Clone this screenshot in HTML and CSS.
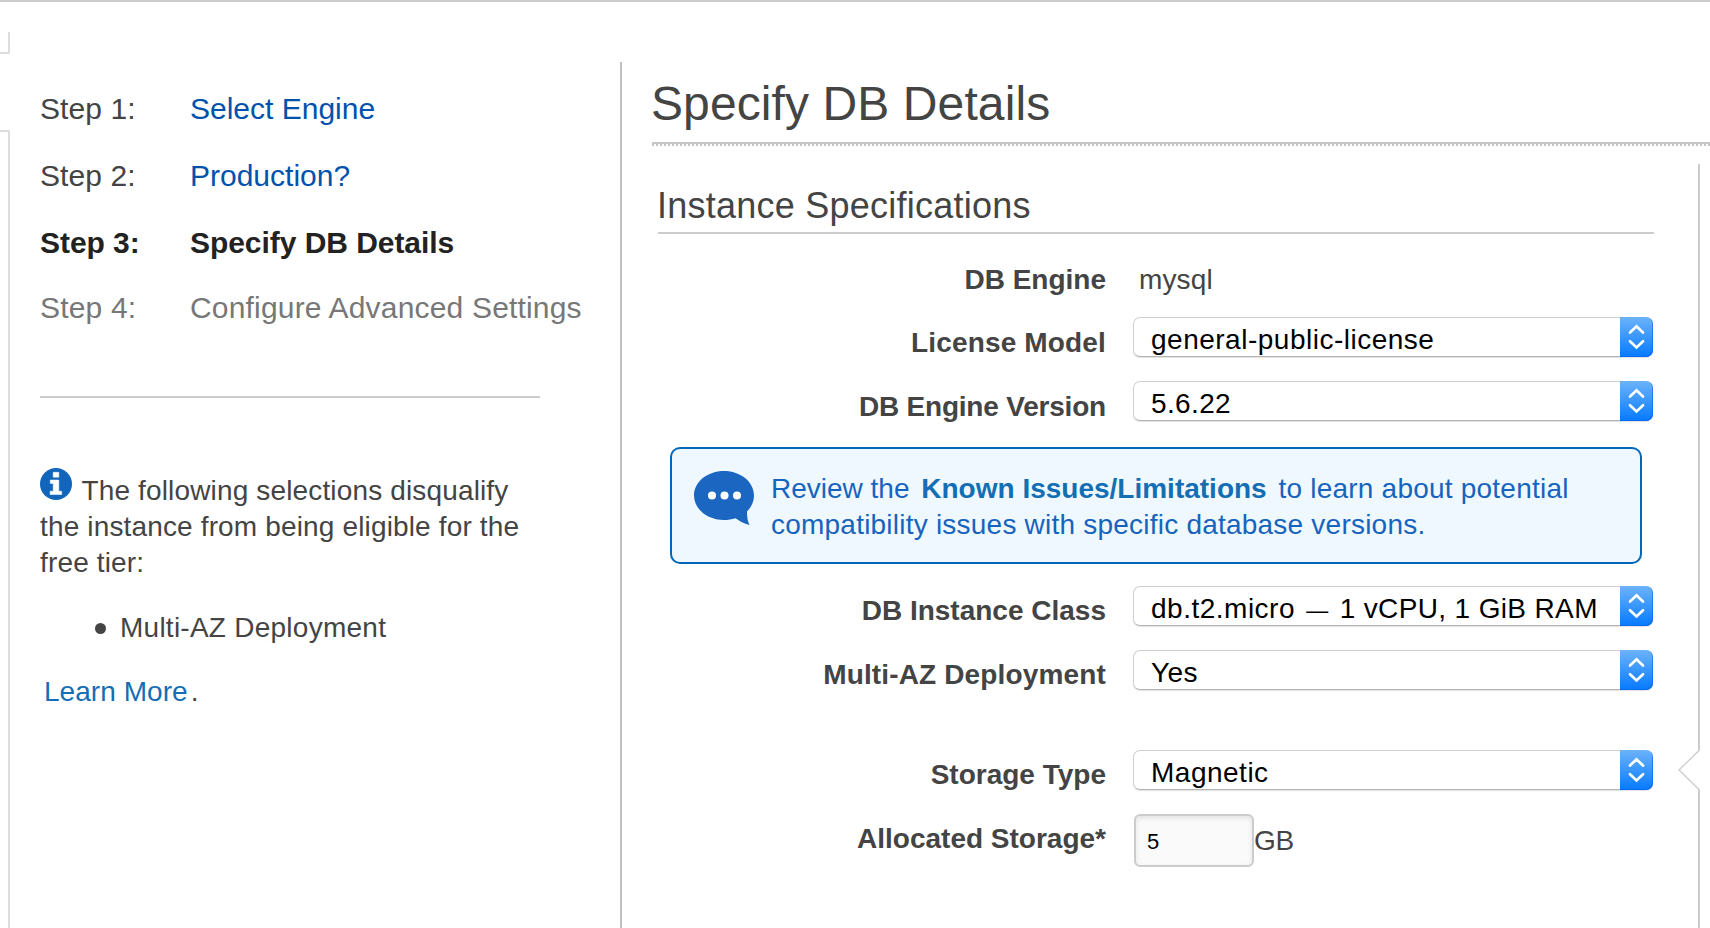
FILE: index.html
```html
<!DOCTYPE html>
<html lang="en">
<head>
<meta charset="utf-8">
<title>Specify DB Details</title>
<link rel="stylesheet" href="styles.css">
</head>
<body>
<svg class="defs" width="0" height="0" aria-hidden="true">
  <symbol id="chevrons" viewBox="0 0 33 40">
    <path d="M10 15.500L16.500 9.300L23 15.500M10 24.300L16.500 30.500L23 24.300" fill="none" stroke="#fff" stroke-width="2.700" stroke-linecap="round" stroke-linejoin="miter"/>
  </symbol>
</svg>
<div class="page">
  <div class="rail">
    <div class="rail-top"></div>
    <div class="rail-bottom"></div>
  </div>
  <aside class="sidebar">
    <ol class="steps">
      <li class="step"><span class="step-num">Step 1:</span><a class="step-name step-link">Select Engine</a></li>
      <li class="step"><span class="step-num">Step 2:</span><a class="step-name step-link">Production?</a></li>
      <li class="step step-current"><span class="step-num">Step 3:</span><span class="step-name">Specify DB Details</span></li>
      <li class="step step-next"><span class="step-num">Step 4:</span><span class="step-name">Configure Advanced Settings</span></li>
    </ol>
    <div class="rule"></div>
    <p class="info"><svg class="info-icon" viewBox="0 0 32 32"><circle cx="16" cy="16" r="16" fill="#1166bb"/><path d="M13.200 4.300h5.600v4.900h-5.600zM10.300 12h8.500v11.200h2.900v3.300h-11.600v-3.300h3.100v-7.800h-2.900z" fill="#fff" stroke="#fff" stroke-width="0.500" stroke-linejoin="round"/></svg> The following selections disqualify<br>the instance from being eligible for the<br>free tier:</p>
    <ul class="reasons"><li class="reason"><span class="bullet"></span>Multi-AZ Deployment</li></ul>
    <p class="more"><a class="more-link">Learn More</a>.</p>
  </aside>
  <main class="main">
    <h1 class="title">Specify DB Details</h1>
    <div class="title-rule"></div>
    <div class="content">
      <section class="form">
        <h2 class="section-title">Instance Specifications</h2>
        <div class="group">
          <div class="row row-static"><span class="label">DB Engine</span><span class="value">mysql</span></div>
          <div class="row"><span class="label label-loose">License Model</span><div class="select"><span class="select-text wide">general-public-license</span><svg class="select-arrows"><use href="#chevrons"/></svg></div></div>
          <div class="row"><span class="label label-tight">DB Engine Version</span><div class="select"><span class="select-text">5.6.22</span><svg class="select-arrows"><use href="#chevrons"/></svg></div></div>
        </div>
        <div class="notice">
          <svg class="bubble" viewBox="0 0 60 54"><path d="M30 0C46.500 0 60 10.800 60 24.500C60 31 57 36.500 53 40.500C53 45.500 53.500 50 55.500 54C50 52.500 45.500 50 41.500 47.200C38 48.400 34 49 30 49C13.500 49 0 38.200 0 24.500S13.500 0 30 0z" fill="#1a66c0"/><g fill="#fff"><circle cx="18" cy="24.500" r="4"/><circle cx="30.500" cy="24.500" r="4"/><circle cx="43" cy="24.500" r="4"/></g></svg>
          <p class="notice-text">Review the <a class="notice-link">Known Issues/Limitations</a> <span class="loose">to learn about potential</span><br><span class="loose">compatibility issues with specific database versions.</span></p>
        </div>
        <div class="group group-lower">
          <div class="row"><span class="label">DB Instance Class</span><div class="select"><span class="select-text"><span class="wide">db.t2.micro</span> <span class="dash">—</span> 1 vCPU, 1 GiB RAM</span><svg class="select-arrows"><use href="#chevrons"/></svg></div></div>
          <div class="row"><span class="label label-loose">Multi-AZ Deployment</span><div class="select"><span class="select-text">Yes</span><svg class="select-arrows"><use href="#chevrons"/></svg></div></div>
        </div>
        <div class="group group-storage">
          <div class="row"><span class="label">Storage Type</span><div class="select"><span class="select-text wide">Magnetic</span><svg class="select-arrows"><use href="#chevrons"/></svg></div></div>
          <div class="row"><span class="label">Allocated Storage*</span><div class="input">5</div><span class="unit">GB</span></div>
        </div>
      </section>
      <div class="edge">
        <div class="edge-upper"></div>
        <svg class="notch" viewBox="0 0 22 40"><path d="M21.500 0L1 20L21.500 40" fill="none" stroke="#ccc" stroke-width="1.300"/></svg>
        <div class="edge-lower"></div>
      </div>
    </div>
  </main>
</div>
</body>
</html>
```

FILE: styles.css
```css
* { box-sizing: border-box; }

body {
  margin: 0;
  background: #fff;
  color: #444;
  font-family: "Liberation Sans", Arial, sans-serif;
  font-size: 28px;
  letter-spacing: 0.15px;
  overflow: hidden;
}

h1, h2, p, ol, ul { margin: 0; padding: 0; list-style: none; font-weight: normal; }

.defs { display: block; }

.page {
  display: flex;
  width: 1710px;
  height: 928px;
  border-top: 2px solid #ccc;
}

/* Left rail */
.rail { display: flex; flex-direction: column; width: 10px; padding-top: 30px; gap: 76px; }
.rail-top { height: 22px; border: solid #ddd; border-width: 0 2px 2px 0; }
.rail-bottom { flex: 1; border: solid #ddd; border-width: 2px 2px 0 0; }

/* Wizard steps */
.sidebar { width: 610px; padding: 73px 0 0 30px; white-space: nowrap; }
.step { display: flex; font-size: 30px; line-height: 67px; letter-spacing: 0.1px; }
.step-num { width: 150px; }
.step-link { color: #0052ad; letter-spacing: 0; }
.step-current { color: #222; font-weight: bold; letter-spacing: -0.05px; }
.step-next { color: #777; line-height: 63px; letter-spacing: 0.18px; }

.rule { width: 500px; height: 2px; margin-top: 57px; background: #ccc; }

.info { margin-top: 75px; line-height: 36px; }
.info-icon { width: 32px; height: 32px; margin: -8px 2px 0 0; }
.reasons { margin-top: 29px; }
.reason { display: flex; align-items: center; line-height: 36px; letter-spacing: 0.25px; }
.bullet { width: 11px; height: 11px; margin: 0 14px 0 55px; border-radius: 50%; background: #444; }
.more { margin-top: 28px; line-height: 36px; }
.more-link { padding: 0 3px 0 4px; color: #146eb4; letter-spacing: 0.05px; }

/* Main column */
.main {
  display: flex;
  flex-direction: column;
  flex: 1;
  margin-top: 60px;
  padding-left: 30px;
  border-left: 2px solid #c0c0c0;
}
.title {
  height: 80px;
  margin-left: -1px;
  font-size: 48px;
  line-height: 83px;
  letter-spacing: 0.1px;
}
.title-rule {
  height: 4px;
  border-top: 2px solid #c8c8c8;
  background: repeating-linear-gradient(90deg, #c4c4c4 0 2px, #fff 2px 4px);
}
.content { display: flex; flex: 1; }
.form { width: 1002px; padding: 34px 0 0 6px; margin-right: 24px; }
.section-title {
  height: 54px;
  border-bottom: 2px solid #ccc;
  font-size: 36px;
  line-height: 52px;
  letter-spacing: 0.24px;
  text-indent: -1px;
}

.group { padding-top: 7px; }
.row { display: flex; height: 64px; }
.label {
  width: 448px;
  padding-top: 11px;
  line-height: 54px;
  font-weight: bold;
  letter-spacing: 0;
  text-align: right;
}
.label-loose { letter-spacing: 0.15px; }
.label-tight { letter-spacing: -0.2px; }
.value { margin-left: 33px; padding-top: 12px; line-height: 54px; }
.row-static .label { padding-top: 12px; }

.select {
  display: flex;
  justify-content: space-between;
  width: 520px;
  height: 40px;
  margin: 12px 0 0 27px;
  border: 1px solid #d0d0d0;
  border-bottom-color: #b4b4b4;
  border-right: 0;
  border-radius: 7px;
  box-shadow: 0 1px 1px rgba(0, 0, 0, 0.12);
  color: #000;
}
.select-text { padding-left: 17px; line-height: 44px; letter-spacing: 0.36px; white-space: nowrap; }
.wide { letter-spacing: 0.5px; }
.dash { margin: 0 3px; font-size: 22px; line-height: 1; }
.select-arrows {
  width: 33px;
  height: 40px;
  margin-top: -1px;
  border-radius: 0 7px 7px 0;
  background: linear-gradient(#6cb3fa, #067aff);
  box-shadow: inset -1px -1px 0 rgba(0, 90, 230, 0.5);
}

.notice {
  display: flex;
  width: 972px;
  height: 117px;
  margin: 14px 0 0 12px;
  padding: 22px;
  border: 2px solid #0067b8;
  border-radius: 10px;
  background: #f0f8ff;
  color: #1664bd;
}
.bubble { flex: none; width: 60px; height: 54px; }
.notice-text { margin: 0 0 0 17px; line-height: 36px; letter-spacing: 0; white-space: nowrap; }
.notice-link { padding: 0 4px; color: #146eb4; font-weight: bold; letter-spacing: 0; }
.loose { letter-spacing: 0.22px; }

.group-lower { padding-top: 10px; }
.group-storage { padding-top: 36px; }
.group-lower .label, .group-storage .label { padding-top: 10px; }

.input {
  width: 120px;
  height: 53px;
  margin: 12px 0 0 28px;
  padding-left: 11px;
  border: 2px solid #ccc;
  border-radius: 6px;
  background: #fafafa;
  box-shadow: inset 0 2px 5px rgba(0, 0, 0, 0.1);
  color: #000;
  font-size: 22px;
  line-height: 51px;
}
.unit { padding-top: 12px; line-height: 54px; letter-spacing: -0.3px; }

/* Help pane outline with its pointer */
.edge { display: flex; flex-direction: column; align-items: flex-end; width: 22px; padding-top: 18px; }
.edge-upper { width: 2px; height: 586px; background: #ccc; }
.notch { width: 22px; height: 40px; }
.edge-lower { flex: 1; width: 2px; background: #ccc; }
```
